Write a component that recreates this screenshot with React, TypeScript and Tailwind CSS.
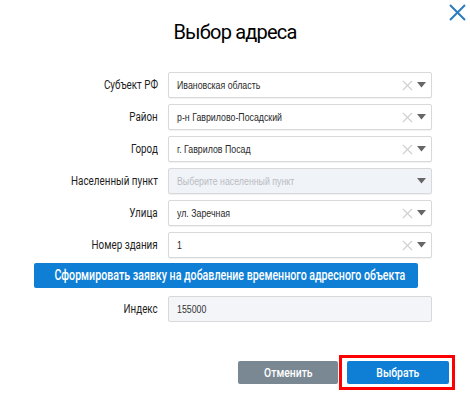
import React from 'react';

const roboto = { fontFamily: 'Roboto, "Liberation Sans", sans-serif' };
const arial = { fontFamily: '"Liberation Sans", Arial, sans-serif' };

function ClearIcon() {
  return (
    <svg width="11" height="11" viewBox="0 0 11 11" className="shrink-0">
      <path d="M1 1 L10 10 M10 1 L1 10" stroke="#cfcfcf" strokeWidth="1.1" fill="none" />
    </svg>
  );
}

function Caret() {
  return (
    <svg width="9" height="6" viewBox="0 0 9 6" className="shrink-0">
      <path d="M0 0 H9 L4.5 5.5 Z" fill="#666" />
    </svg>
  );
}

type Row = { label: string; value: string; disabled?: boolean };

const rows: Row[] = [
  { label: 'Субъект РФ', value: 'Ивановская область' },
  { label: 'Район', value: 'р-н Гаврилово-Посадский' },
  { label: 'Город', value: 'г. Гаврилов Посад' },
  { label: 'Населенный пункт', value: 'Выберите населенный пункт', disabled: true },
  { label: 'Улица', value: 'ул. Заречная' },
  { label: 'Номер здания', value: '1' },
];

function Field({ label, children }: { label: string; children: React.ReactNode }) {
  return (
    <div className="flex h-[26px] items-center">
      <div className="w-[158px] shrink-0 text-right text-[12px] text-[#1e1e1e]" style={roboto}>
        <span className="inline-block origin-right scale-x-[0.82]">{label}</span>
      </div>
      <div className="ml-[10px] h-full w-[264px]">{children}</div>
    </div>
  );
}

export default function App() {
  return (
    <div className="relative h-[395px] w-[470px] overflow-hidden bg-white" style={roboto}>
      <button className="absolute top-[4px] right-[4px] p-0">
        <svg width="17" height="17" viewBox="0 0 17 17">
          <path d="M1 1 L16 16 M16 1 L1 16" stroke="#2b7bbd" strokeWidth="2" fill="none" />
        </svg>
      </button>

      <h1 className="pt-[18px] text-center text-[20px] leading-[28px] tracking-[-0.8px] text-black">
        Выбор адреса
      </h1>

      <div className="mt-[26px] flex flex-col gap-[6px]">
        {rows.map((r) => (
          <Field key={r.label} label={r.label}>
            <div
              className={
                'flex h-full items-center rounded-[2px] border border-[#d9d9d9] pr-[5px] pl-[8px] shadow-[0_1px_1px_rgba(0,0,0,0.06)] ' +
                (r.disabled ? 'bg-[#f0f3f8]' : 'bg-white')
              }
            >
              <div className="min-w-0 flex-1 text-[11px]" style={arial}>
                <span
                  className={
                    'inline-block origin-left scale-x-[0.8] whitespace-nowrap ' +
                    (r.disabled ? 'text-[#b9bcc1]' : 'text-[#2a2a2a]')
                  }
                >
                  {r.value}
                </span>
              </div>
              <div className="flex items-center gap-[4px]">
                {!r.disabled && <ClearIcon />}
                <Caret />
              </div>
            </div>
          </Field>
        ))}
      </div>

      <button className="mt-[5px] ml-[34px] flex h-[25px] w-[384px] items-center justify-center overflow-visible rounded-[2px] bg-[#0f7fd6] text-white">
        <span className="ml-[8px] inline-block scale-x-[0.76] text-[14px] font-medium whitespace-nowrap">
          Сформировать заявку на добавление временного адресного объекта
        </span>
      </button>

      <div className="mt-[8px]">
        <Field label="Индекс">
          <div className="flex h-full items-center rounded-[2px] border border-[#d9d9d9] bg-[#f3f5f9] pl-[8px]">
            <span className="inline-block origin-left scale-x-[0.8] text-[11px] text-[#333]" style={arial}>
              155000
            </span>
          </div>
        </Field>
      </div>

      <div className="mt-[33px] flex items-center justify-end gap-[1px] pr-[15px]">
        <button className="flex h-[23px] w-[100px] items-center justify-center rounded-[2px] bg-[#7a8893] text-white">
          <span className="inline-block scale-x-[0.8] text-[13px] font-medium">Отменить</span>
        </button>
        <div className="border-[3px] border-[#ff0000] py-[3px] pr-[3px] pl-[5px]">
          <button className="flex h-[23px] w-[102px] items-center justify-center rounded-[2px] bg-[#0f7fd6] text-white">
            <span className="inline-block scale-x-[0.8] text-[13px] font-medium">Выбрать</span>
          </button>
        </div>
      </div>
    </div>
  );
}
